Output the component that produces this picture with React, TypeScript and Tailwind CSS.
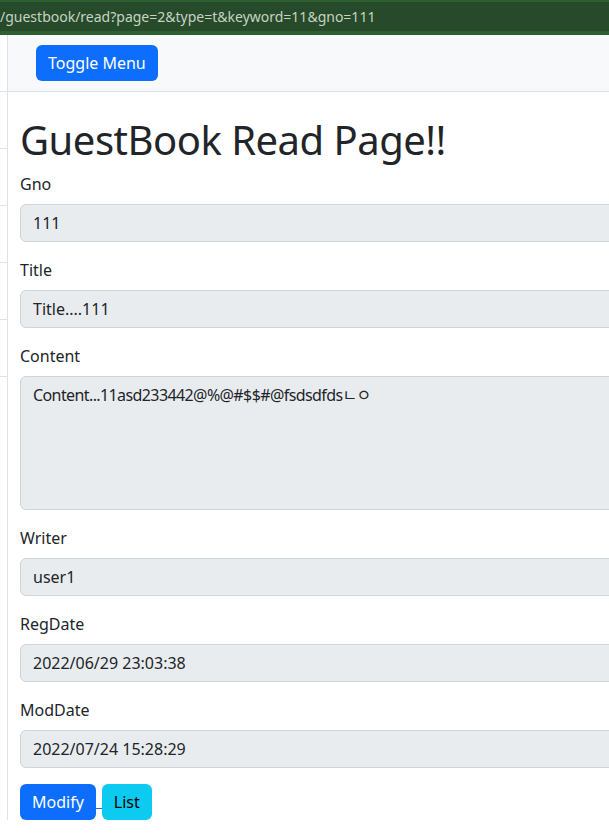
import React from "react";

const Field = ({ label, value, tall }: { label: string; value: string; tall?: boolean }) => (
    <div className="mb-4">
        <div className="mb-2 leading-6 text-[16px] text-[#212529]">{label}</div>
        <div
            className={`w-[640px] bg-[#e9ecef] border border-[#ced4da] rounded-[6px] px-3 py-[6px] leading-6 text-[16px] text-[#212529] whitespace-nowrap ${tall ? "h-[134px] tracking-[-0.6px]" : "h-[38px]"}`}
        >
            {value}
        </div>
    </div>
);

const App: React.FC = () => {
    return (
        <div
            className="w-full min-h-screen overflow-hidden bg-white"
            style={{ fontFamily: '"Noto Sans", "Noto Sans CJK KR", sans-serif' }}
        >
            {/* address bar strip */}
            <div className="h-[35px] bg-[#2d5f30] pt-[2px] pb-[1px]">
                <div className="h-[29px] bg-[#264a2a] flex items-center text-[14px] text-[#c6d3c4] whitespace-nowrap">
                    /guestbook/read?page=2&amp;type=t&amp;keyword=11&amp;gno=111
                </div>
            </div>

            <div className="flex">
                {/* Sidebar */}
                <div className="w-[8px] shrink-0 border-r border-[#dee2e6] bg-white">
                    <div className="h-[57px] border-b border-[#dee2e6]" />
                    <div className="h-[57px] border-b border-[#dee2e6]" />
                    <div className="h-[57px] border-b border-[#dee2e6]" />
                    <div className="h-[57px] border-b border-[#dee2e6]" />
                    <div className="h-[57px] border-b border-[#dee2e6]" />
                    <div className="h-[57px] border-b border-[#dee2e6]" />
                </div>

                {/* Main */}
                <div className="flex-1 min-w-0">
                    <div className="h-[57px] bg-[#f8f9fa] border-b border-[#dee2e6] flex items-center pl-[28px]">
                        <button className="bg-[#0d6efd] text-white text-[16px] leading-6 px-3 py-[6px] rounded-[6px]">
                            Toggle Menu
                        </button>
                    </div>

                    <div className="px-3">
                        <h1 className="mt-6 mb-2 text-[40px] leading-[48px] font-normal tracking-[-0.5px] text-[#212529] whitespace-nowrap">
                            GuestBook Read Page!!
                        </h1>

                        <Field label="Gno" value="111" />
                        <Field label="Title" value="Title....111" />
                        <Field label="Content" value="Content...11asd233442@%@#$$#@fsdsdfdsㄴㅇ" tall />
                        <Field label="Writer" value="user1" />
                        <Field label="RegDate" value="2022/06/29 23:03:38" />
                        <Field label="ModDate" value="2022/07/24 15:28:29" />

                        <div className="flex items-start">
                            <button className="bg-[#0d6efd] text-white text-[16px] leading-6 px-3 py-[6px] rounded-[6px]">
                                Modify
                            </button>
                            <div className="w-[6px] h-px bg-[#0d6efd] mt-[24px]" />
                            <button className="bg-[#0dcaf0] text-black text-[16px] leading-6 px-3 py-[6px] rounded-[6px]">
                                List
                            </button>
                        </div>
                    </div>
                </div>
            </div>
        </div>
    );
};

export default App;
